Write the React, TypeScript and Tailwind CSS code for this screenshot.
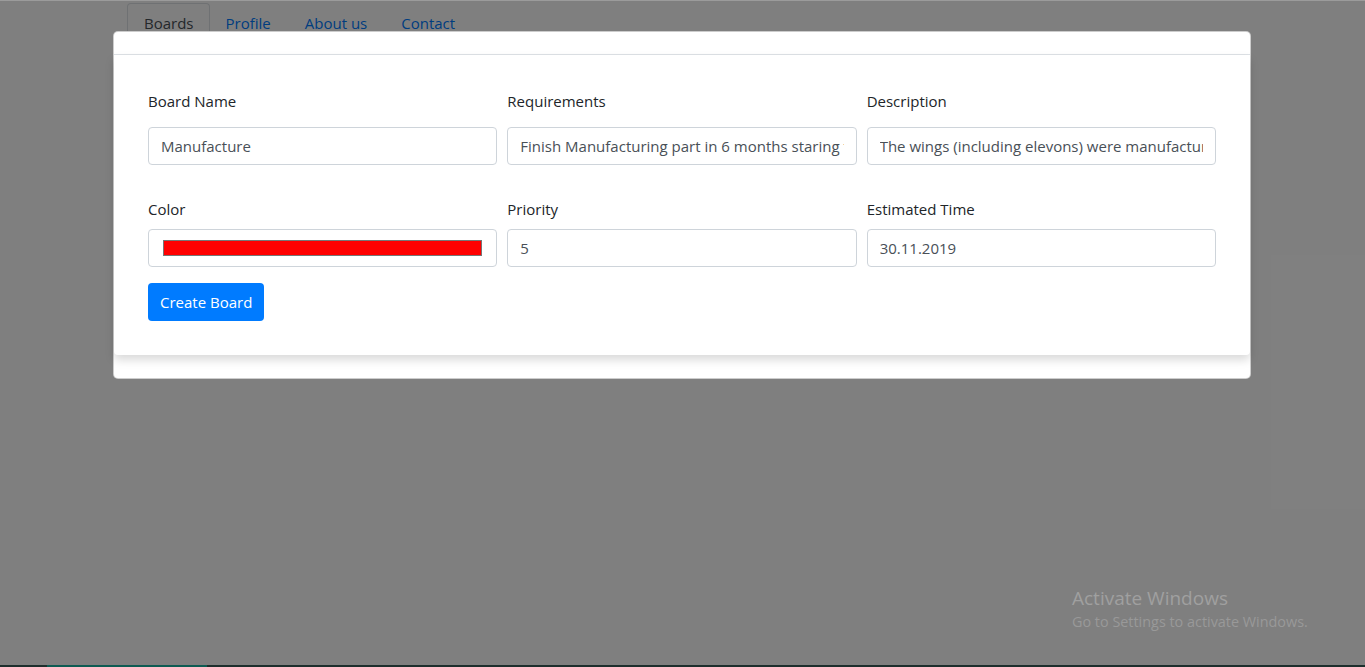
import React from "react";

const font = { fontFamily: '"Open Sans", "Noto Sans", sans-serif' };

function Field({ label, children, labelGap }: { label: string; children: React.ReactNode; labelGap: string }) {
  return (
    <div className="flex flex-col">
      <label className={`text-[15px] leading-[22px] text-[#212529] ${labelGap}`}>{label}</label>
      {children}
    </div>
  );
}

function TextInput({ value }: { value: string }) {
  return (
    <input
      readOnly
      defaultValue={value}
      className="h-[38px] w-full border border-[#ced4da] rounded-[4px] bg-white px-3 text-[15px] text-[#495057] outline-none"
      style={font}
    />
  );
}

export default function App() {
  return (
    <div className="relative w-full h-screen bg-white overflow-hidden" style={font}>
      {/* page behind the modal */}
      <div className="pt-[3px] pl-[127px]">
        <div className="flex items-end text-[15px]">
          <div className="h-[40px] pl-4 pr-[15px] flex items-center border border-[#dee2e6] border-b-0 rounded-t-[4px] text-[#495057]">Boards</div>
          <div className="h-[40px] px-4 flex items-center text-[#007bff]">Profile</div>
          <div className="h-[40px] px-4 ml-[2px] flex items-center text-[#007bff]">About us</div>
          <div className="h-[40px] px-4 ml-[2px] flex items-center text-[#007bff]">Contact</div>
        </div>
      </div>

      {/* backdrop */}
      <div className="absolute inset-0 bg-black/50" />
      <div className="absolute top-0 left-0 right-0 h-px bg-[#9b9b9b]" />

      {/* modal */}
      <div className="absolute top-[31px] left-[113px]">
        <div className="w-[1138px] bg-white rounded-[5px] border border-black/20 flex flex-col">
          <div className="h-[23px] border-b border-[#dee2e6]" />
          <div className="bg-white rounded-b-[4px] shadow-[0_5px_10px_rgba(0,0,0,0.15)] px-[34px] pt-[35px] pb-[34px]">
            <div className="grid grid-cols-3 gap-x-[10px]">
              <Field label="Board Name" labelGap="mb-[15px]">
                <TextInput value="Manufacture" />
              </Field>
              <Field label="Requirements" labelGap="mb-[15px]">
                <TextInput value="Finish Manufacturing part in 6 months staring from today" />
              </Field>
              <Field label="Description" labelGap="mb-[15px]">
                <TextInput value="The wings (including elevons) were manufactured in" />
              </Field>
            </div>
            <div className="grid grid-cols-3 gap-x-[10px] mt-[33px]">
              <Field label="Color" labelGap="mb-[9px]">
                <div className="h-[38px] border border-[#ced4da] rounded-[4px] bg-white px-[14px] flex items-center">
                  <div className="w-full h-[16px] bg-[#ff0000] border border-[#767676]" />
                </div>
              </Field>
              <Field label="Priority" labelGap="mb-[9px]">
                <TextInput value="5" />
              </Field>
              <Field label="Estimated Time" labelGap="mb-[9px]">
                <TextInput value="30.11.2019" />
              </Field>
            </div>
            <button className="mt-[16px] h-[38px] px-3 bg-[#007bff] text-white text-[15px] rounded-[4px]">
              Create Board
            </button>
          </div>
          <div className="h-[23px]" />
        </div>
      </div>

      {/* activation watermark */}
      <div className="absolute left-[1072px] top-[587px] text-[#a0a0a0] leading-tight">
        <div className="text-[19px]">Activate Windows</div>
        <div className="text-[14.4px] text-[#999999] mt-[2px]">Go to Settings to activate Windows.</div>
      </div>

      {/* taskbar edge */}
      <div className="absolute bottom-0 left-0 right-0 h-[2px] bg-[#1d2e2c] flex">
        <div className="ml-[47px] w-[160px] h-full bg-[#0d5b52]" />
      </div>
    </div>
  );
}
